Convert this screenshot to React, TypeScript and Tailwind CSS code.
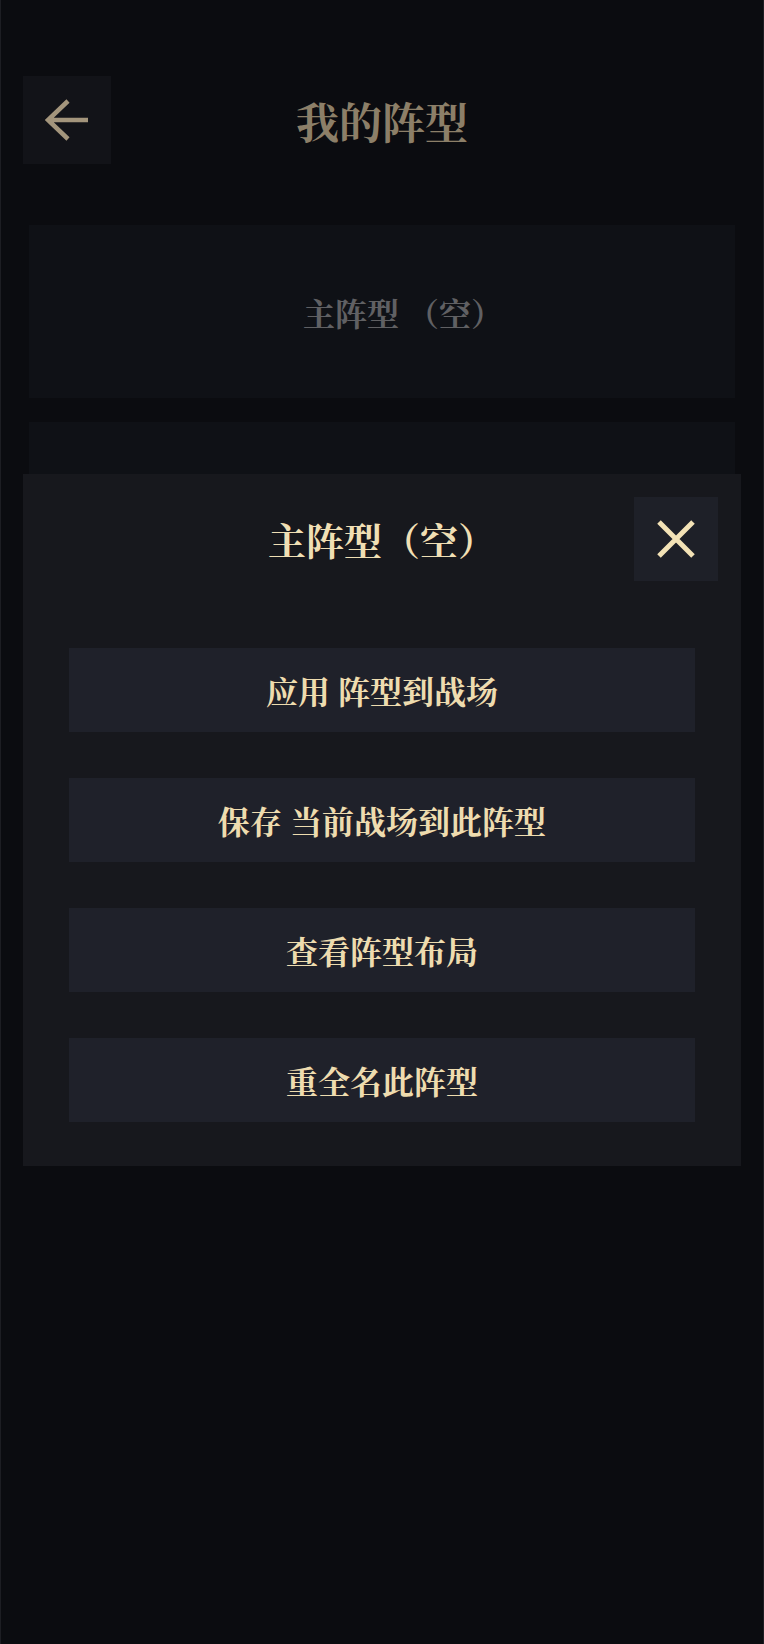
import { useState } from 'react';

const serif = 'font-["Noto_Serif_CJK_SC","Noto_Serif_SC","Source_Han_Serif_SC",serif]';

function BackArrow() {
  return (
    <svg width="44" height="42" viewBox="0 0 44 42" fill="none">
      <path d="M23 2 L3 21 L23 40 M3 21 H43" stroke="#a3957c" strokeWidth="4.5" />
    </svg>
  );
}

function CloseIcon() {
  return (
    <svg width="40" height="40" viewBox="0 0 40 40" fill="none">
      <path d="M3 3 L37 37 M37 3 L3 37" stroke="#f3e2b6" strokeWidth="5" />
    </svg>
  );
}

const actions = ['应用 阵型到战场', '保存 当前战场到此阵型', '查看阵型布局', '重全名此阵型'];

export default function App() {
  const [open, setOpen] = useState(true);
  const lineups = [{ name: '主阵型', empty: true }, { name: '', empty: true }];

  return (
    <div className={`relative min-h-screen w-full bg-[#0b0c10] border-x border-[#1d1e23] ${serif}`}>
      <header className="pt-[76px] px-[22px] grid grid-cols-[88px_1fr_88px] items-center">
        <button className="h-[88px] w-[88px] flex items-center justify-center bg-[#121318]">
          <BackArrow />
        </button>
        <h1 className="text-center text-[43px] leading-none font-bold text-[#8c7f68]">我的阵型</h1>
        <div />
      </header>

      <main className="mt-[61px] mx-[28px] flex flex-col gap-[24px]">
        {lineups.map((l, i) => (
          <div key={i} className="h-[173px] bg-[#0f1116] flex items-center justify-center pl-[42px]">
            {l.name && (
              <span className="text-[32px] font-bold text-[#606063] whitespace-pre">
                {l.name} （空）
              </span>
            )}
          </div>
        ))}
      </main>

      {open && (
        <div className="absolute top-[474px] left-[22px] w-[718px] bg-[#17181d] pt-[23px] pb-[44px]">
          <div className="relative h-[84px] flex items-center justify-center">
            <h2 className="text-[38px] leading-none font-bold text-[#f0dfb4]">主阵型（空）</h2>
            <button
              onClick={() => setOpen(false)}
              className="absolute right-[23px] top-0 h-[84px] w-[84px] flex items-center justify-center bg-[#1e2028]"
            >
              <CloseIcon />
            </button>
          </div>
          <div className="mt-[67px] px-[46px] flex flex-col gap-[46px]">
            {actions.map((a) => (
              <button
                key={a}
                className="h-[84px] w-full bg-[#1f212a] flex items-center justify-center text-[32px] font-bold text-[#eedcaf] whitespace-pre"
              >
                {a}
              </button>
            ))}
          </div>
        </div>
      )}
    </div>
  );
}
